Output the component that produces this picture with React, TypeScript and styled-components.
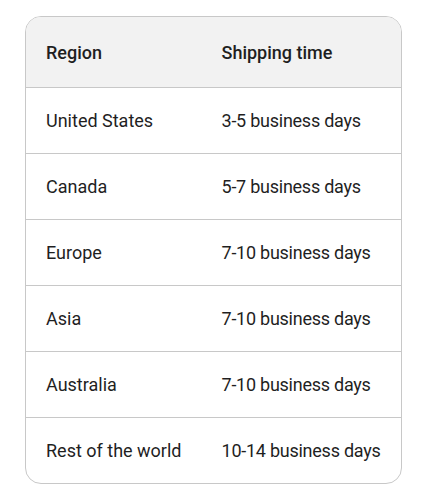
import styled, { createGlobalStyle } from "styled-components";

const GlobalStyle = createGlobalStyle`
  body {
    margin: 0;
    background: #ffffff;
    font-family: Roboto, "Liberation Sans", Arial, sans-serif;
    color: #1f1f1f;
  }
`;

const ROWS = [
  ["United States", "3-5 business days"],
  ["Canada", "5-7 business days"],
  ["Europe", "7-10 business days"],
  ["Asia", "7-10 business days"],
  ["Australia", "7-10 business days"],
  ["Rest of the world", "10-14 business days"],
];

const Page = styled.div`
  padding: 16px 0 0 25px;
`;

const Frame = styled.div`
  display: inline-block;
  border: 1px solid #c8c8c8;
  border-radius: 16px;
  overflow: hidden;
`;

const Table = styled.table`
  border-collapse: collapse;
  font-size: 18px;
  line-height: 25px;
`;

const HeadRow = styled.tr`
  background: #f2f2f2;
`;

const Row = styled.tr`
  border-top: 1px solid #c8c8c8;
`;

const Th = styled.th`
  text-align: left;
  font-weight: 500;
  padding: 23px 20px 22px;
  white-space: nowrap;
`;

const Td = styled.td<{ $tight?: boolean }>`
  padding: 20px 20px;
  white-space: nowrap;
  letter-spacing: ${(p) => (p.$tight ? "-0.25px" : "0")};
`;

export default function App() {
  return (
    <>
      <GlobalStyle />
      <Page>
        <Frame>
          <Table>
            <thead>
              <HeadRow>
                <Th>Region</Th>
                <Th>Shipping time</Th>
              </HeadRow>
            </thead>
            <tbody>
              {ROWS.map(([region, time]) => (
                <Row key={region}>
                  <Td>{region}</Td>
                  <Td $tight>{time}</Td>
                </Row>
              ))}
            </tbody>
          </Table>
        </Frame>
      </Page>
    </>
  );
}
